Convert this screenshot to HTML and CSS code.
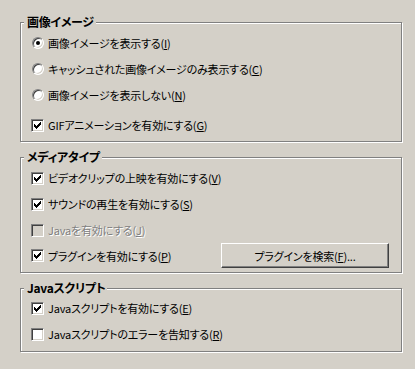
FILE: index.html
```html
<!DOCTYPE html>
<html lang="ja">
<head>
<meta charset="utf-8">
<link rel="stylesheet" href="styles.css">
</head>
<body>
<div class="dlg">
  <section class="group g1">
    <span class="legend">画像イメージ</span>
    <div class="row"><span class="radio on"></span><span class="lbl">画像イメージを表示する(<u>I</u>)</span></div>
    <div class="row"><span class="radio"></span><span class="lbl">キャッシュされた画像イメージのみ表示する(<u>C</u>)</span></div>
    <div class="row"><span class="radio"></span><span class="lbl">画像イメージを表示しない(<u>N</u>)</span></div>
    <div class="row sep"><span class="check on"></span><span class="lbl">GIFアニメーションを有効にする(<u>G</u>)</span></div>
  </section>
  <section class="group g2">
    <span class="legend">メディアタイプ</span>
    <div class="row"><span class="check on"></span><span class="lbl">ビデオクリップの上映を有効にする(<u>V</u>)</span></div>
    <div class="row"><span class="check on"></span><span class="lbl">サウンドの再生を有効にする(<u>S</u>)</span></div>
    <div class="row"><span class="check off"></span><span class="lbl dis">Javaを有効にする(<u>J</u>)</span></div>
    <div class="row plug"><span class="check on"></span><span class="lbl">プラグインを有効にする(<u>P</u>)</span><button class="btn" type="button">プラグインを検索(<u>F</u>)...</button></div>
  </section>
  <section class="group g3">
    <span class="legend">Javaスクリプト</span>
    <div class="row"><span class="check on"></span><span class="lbl">Javaスクリプトを有効にする(<u>E</u>)</span></div>
    <div class="row"><span class="check"></span><span class="lbl">Javaスクリプトのエラーを告知する(<u>R</u>)</span></div>
  </section>
</div>
</body>
</html>
```
FILE: styles.css
```css
html, body {
  margin: 0;
  padding: 0;
  background: #d4d0c8;
}
body {
  width: 415px;
  height: 369px;
  overflow: hidden;
  font-family: "Noto Sans CJK JP", "Noto Sans", sans-serif;
  font-size: 11px;
  letter-spacing: -0.2px;
  font-feature-settings: "palt";
  color: #000;
}
.dlg {
  padding: 22px 0 0 20px;
  width: 382px;
  display: flex;
  flex-direction: column;
  gap: 15px;
}
.group {
  position: relative;
  border: 1px solid #808080;
  box-shadow: inset 1px 1px #fff, 1px 1px #fff;
  display: flex;
  flex-direction: column;
  gap: 6px;
  padding: 10px 12px 6px 10px;
}
.g2 { padding-bottom: 4px; }
.g3 { padding: 9px 12px 7px 10px; }
.legend {
  position: absolute;
  top: -9px;
  left: 3px;
  padding: 0 2px 0 3px;
  background: #d4d0c8;
  font-weight: bold;
  font-size: 12px;
  letter-spacing: -0.3px;
  line-height: 16px;
}
.row {
  height: 20px;
  display: flex;
  align-items: center;
}
.row.sep { margin-top: 4px; }
.row.plug { height: 25px; margin-top: -3px; }
.lbl {
  margin-left: 4px;
  line-height: 14px;
  white-space: nowrap;
}
.lbl u { text-decoration: underline; text-underline-offset: 1px; }
.lbl.dis {
  color: #808080;
  text-shadow: 1px 1px 0 #fff;
}
.check {
  box-sizing: border-box;
  width: 13px;
  height: 13px;
  flex: none;
  border: 1px solid;
  border-color: #808080 #fff #fff #808080;
  box-shadow: inset 1px 1px #404040, inset -1px -1px #d4d0c8;
  background: #fff;
  position: relative;
}
.check.off { background: #d4d0c8; }
.check.on::after {
  content: "";
  position: absolute;
  left: 2px;
  top: 2px;
  width: 7px;
  height: 7px;
  background:
    linear-gradient(#000, #000) 0 2px / 1px 3px no-repeat,
    linear-gradient(#000, #000) 1px 3px / 1px 3px no-repeat,
    linear-gradient(#000, #000) 2px 4px / 1px 3px no-repeat,
    linear-gradient(#000, #000) 3px 3px / 1px 3px no-repeat,
    linear-gradient(#000, #000) 4px 2px / 1px 3px no-repeat,
    linear-gradient(#000, #000) 5px 1px / 1px 3px no-repeat,
    linear-gradient(#000, #000) 6px 0 / 1px 3px no-repeat;
}
.radio {
  box-sizing: border-box;
  width: 12px;
  height: 12px;
  flex: none;
  margin-left: 1px;
  border-radius: 50%;
  border: 1px solid;
  border-color: #808080 #fff #fff #808080;
  box-shadow: inset 1px 1px #404040, inset -1px -1px #d4d0c8;
  background: #fff;
  position: relative;
}
.radio.on::after {
  content: "";
  position: absolute;
  left: 3px;
  top: 3px;
  width: 4px;
  height: 4px;
  border-radius: 50%;
  background: #000;
}
.btn {
  margin-left: auto;
  width: 168px;
  height: 25px;
  box-sizing: border-box;
  border: 1px solid;
  border-color: #fff #404040 #404040 #fff;
  box-shadow: inset -1px -1px #808080;
  background: #d4d0c8;
  font: inherit;
  letter-spacing: inherit;
  color: #000;
  padding: 0;
  line-height: 14px;
}
```
